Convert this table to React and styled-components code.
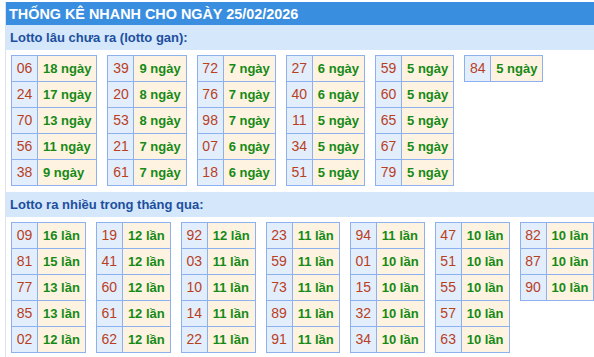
import styled, { createGlobalStyle } from "styled-components";

const GlobalStyle = createGlobalStyle`
  body {
    margin: 0;
    background: #fff;
    font-family: "Liberation Sans", Arial, sans-serif;
    overflow: hidden;
  }
`;

const ganData = [
  [["06", 18], ["24", 17], ["70", 13], ["56", 11], ["38", 9]],
  [["39", 9], ["20", 8], ["53", 8], ["21", 7], ["61", 7]],
  [["72", 7], ["76", 7], ["98", 7], ["07", 6], ["18", 6]],
  [["27", 6], ["40", 6], ["11", 5], ["34", 5], ["51", 5]],
  [["59", 5], ["60", 5], ["65", 5], ["67", 5], ["79", 5]],
  [["84", 5]],
];

const nhieuData = [
  [["09", 16], ["81", 15], ["77", 13], ["85", 13], ["02", 12]],
  [["19", 12], ["41", 12], ["60", 12], ["61", 12], ["62", 12]],
  [["92", 12], ["03", 11], ["10", 11], ["14", 11], ["22", 11]],
  [["23", 11], ["59", 11], ["73", 11], ["89", 11], ["91", 11]],
  [["94", 11], ["01", 10], ["15", 10], ["32", 10], ["34", 10]],
  [["47", 10], ["51", 10], ["55", 10], ["57", 10], ["63", 10]],
  [["82", 10], ["87", 10], ["90", 10]],
];

const App = () => {
  return (
    <>
      <GlobalStyle />
      <Box>
        <Title>THỐNG KÊ NHANH CHO NGÀY 25/02/2026</Title>
        <SubTitle>Lotto lâu chưa ra (lotto gan):</SubTitle>
        <TablesRow>
          {ganData.map((col, i) => (
            <StatTable key={i}>
              <tbody>
                {col.map(([num, count]) => (
                  <tr key={num}>
                    <NumCell>{num}</NumCell>
                    <ValueCell>{count} ngày</ValueCell>
                  </tr>
                ))}
              </tbody>
            </StatTable>
          ))}
        </TablesRow>
        <SubTitle>Lotto ra nhiều trong tháng qua:</SubTitle>
        <TablesRow>
          {nhieuData.map((col, i) => (
            <StatTable key={i}>
              <tbody>
                {col.map(([num, count]) => (
                  <tr key={num}>
                    <NumCell>{num}</NumCell>
                    <ValueCell>{count} lần</ValueCell>
                  </tr>
                ))}
              </tbody>
            </StatTable>
          ))}
        </TablesRow>
      </Box>
    </>
  );
};

export default App;

const Box = styled.div`
  margin: 2px 0 0 5px;
  border-left: 1px solid #dde3ea;
`;

const Title = styled.div`
  height: 23px;
  line-height: 24px;
  background: #3a8ee0;
  color: #fff;
  font-size: 14.4px;
  font-weight: bold;
  padding-left: 3px;
  white-space: nowrap;
`;

const SubTitle = styled.div`
  height: 25px;
  line-height: 26px;
  background: #d4e7fb;
  color: #1d4f9e;
  font-size: 13px;
  font-weight: bold;
  padding-left: 4px;
  white-space: nowrap;
`;

const TablesRow = styled.div`
  display: flex;
  align-items: flex-start;
  gap: 10px;
  padding: 5px 0 6px 5px;
`;

const StatTable = styled.table`
  flex-shrink: 0;
  border-collapse: collapse;
  border: 1px solid #8db0ef;
`;

const Cell = styled.td`
  border: 1px solid #8db0ef;
  height: 26px;
  box-sizing: border-box;
  line-height: 17px;
  padding: 0 5px;
  white-space: nowrap;
`;

const NumCell = styled(Cell)`
  width: 26px;
  padding: 0;
  background: #e3eefc;
  color: #b8401f;
  font-size: 14px;
  text-align: center;
`;

const ValueCell = styled(Cell)`
  background: #fef3e1;
  color: #168a16;
  font-size: 13px;
  font-weight: bold;
`;
